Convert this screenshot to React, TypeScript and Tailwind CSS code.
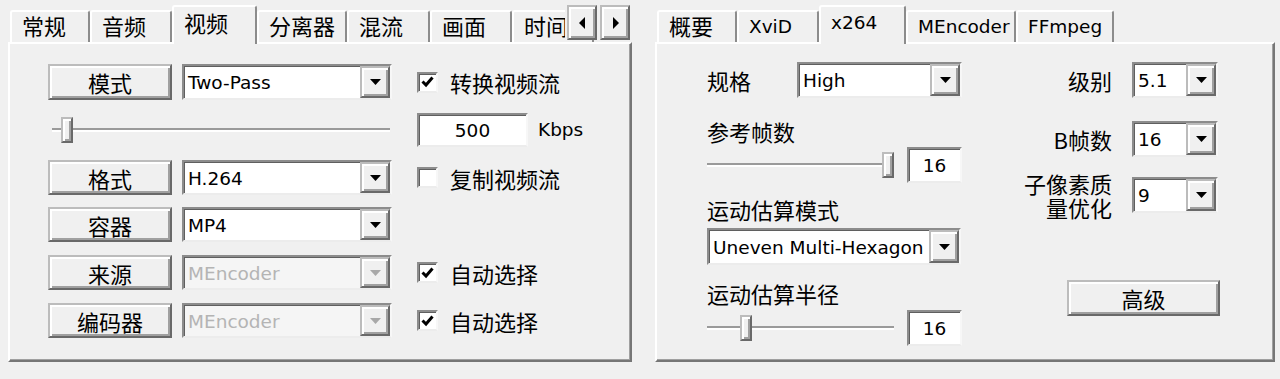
import clsx from "clsx";

const cjk = "font-['Noto_Sans_CJK_SC','DejaVu_Sans',sans-serif] text-[22px]";
const lat = "font-['DejaVu_Sans','Noto_Sans_CJK_SC',sans-serif] text-[18.5px]";

const raised =
  "border-2 border-t-[#bcbcbc] border-l-[#bcbcbc] border-r-[#696969] border-b-[#696969] bg-[#f0f0f0] shadow-[inset_2px_2px_0_#ffffff,inset_-2px_-2px_0_#a0a0a0]";
const sunken =
  "border-2 border-t-[#8c8c8c] border-l-[#8c8c8c] border-r-[#f7f7f7] border-b-[#ececec] shadow-[inset_1px_1px_0_#5f5f5f]";
const panel =
  "h-[320px] border-2 border-t-white border-l-white border-r-[#767676] border-b-[#767676] shadow-[inset_-1px_-1px_0_#a0a0a0]";

type TabItem = { label: string; w: string; latin?: boolean; selected?: boolean };

const leftTabs: TabItem[] = [
  { label: "常规", w: "w-[80px]" },
  { label: "音频", w: "w-[82px]" },
  { label: "视频", w: "w-[85px]", selected: true },
  { label: "分离器", w: "w-[90px]" },
  { label: "混流", w: "w-[83px]" },
  { label: "画面", w: "w-[82px]" },
  { label: "时间", w: "w-[82px]" },
];

const rightTabs: TabItem[] = [
  { label: "概要", w: "w-[80px]" },
  { label: "XviD", w: "w-[82px]", latin: true },
  { label: "x264", w: "w-[87px]", latin: true, selected: true },
  { label: "MEncoder", w: "w-[110px]", latin: true },
  { label: "FFmpeg", w: "w-[98px]", latin: true },
];

function Tab({ label, w, latin, selected }: TabItem) {
  return (
    <div
      className={clsx(
        "flex shrink-0 items-start whitespace-nowrap rounded-t-[3px] border-l-2 border-r-2 border-t-2 border-l-white border-r-[#8c8c8c] border-t-white bg-[#f0f0f0] pl-[10px] leading-[24px]",
        selected ? "relative z-10 -mb-[2px] h-[39px]" : "h-[32px]",
        latin ? (selected ? "pt-[4px]" : "pt-[3px]") : selected ? "pt-[3px]" : "pt-[1px]",
        latin ? lat : cjk,
        w,
      )}
    >
      {label}
    </div>
  );
}

function DownArrow({ disabled = false }: { disabled?: boolean }) {
  return (
    <svg width="11" height="6" viewBox="0 0 11 6" className="block">
      <polygon points="0,0 11,0 5.5,6" fill={disabled ? "#a8a8a8" : "#000"} />
    </svg>
  );
}

function ArrowButton({ dir }: { dir: "left" | "right" }) {
  return (
    <div className={clsx("flex h-[35px] w-[30px] items-center justify-center", raised)}>
      <svg width="7" height="12" viewBox="0 0 7 12" className="block">
        <polygon points={dir === "left" ? "6,0 6,12 0,6" : "1,0 1,12 7,6"} fill="#000" />
      </svg>
    </div>
  );
}

function WinButton({ label, className }: { label: string; className?: string }) {
  return (
    <div className={clsx("flex items-center justify-center leading-none", raised, cjk, className)}>
      {label}
    </div>
  );
}

function Combo({ value, className, disabled = false }: { value: string; className?: string; disabled?: boolean }) {
  return (
    <div className={clsx("flex", sunken, className, disabled ? "bg-[#f5f5f5]" : "bg-white")}>
      <span
        className={clsx(
          "flex-1 self-center overflow-hidden whitespace-nowrap pl-[4px] pt-[2px]",
          lat,
          disabled ? "text-[#b4b4b4]" : "text-black",
        )}
      >
        {value}
      </span>
      <span className={clsx("flex w-[30px] shrink-0 items-center justify-center", raised)}>
        <DownArrow disabled={disabled} />
      </span>
    </div>
  );
}

function TextBox({ value, className }: { value: string; className?: string }) {
  return (
    <div className={clsx("flex items-center justify-center bg-white pt-[2px]", sunken, lat, className)}>
      {value}
    </div>
  );
}

function Check({ checked, label }: { checked: boolean; label: string }) {
  return (
    <div className="flex items-center">
      <span className={clsx("flex h-[21px] w-[21px] shrink-0 items-center justify-center bg-white", sunken)}>
        {checked && (
          <svg width="13" height="12" viewBox="0 0 13 12" className="block">
            <polyline points="1.5,5.5 5,9 11.5,1.5" fill="none" stroke="#000" strokeWidth="3" />
          </svg>
        )}
      </span>
      <span className={clsx("ml-[12px] leading-none", cjk)}>{label}</span>
    </div>
  );
}

function Slider({ className, thumb }: { className?: string; thumb: string }) {
  return (
    <div className={clsx("relative h-[26px] shrink-0", className)}>
      <div className="absolute left-0 right-0 top-[11px] h-[4px] border-b-2 border-t-2 border-b-white border-t-[#9a9a9a]" />
      <div className={clsx("absolute top-0 h-[26px] w-[12px]", raised, thumb)} />
    </div>
  );
}

function FormRow({
  label,
  value,
  disabled,
  check,
}: {
  label: string;
  value: string;
  disabled?: boolean;
  check?: { checked: boolean; label: string };
}) {
  return (
    <div className="flex h-[35px] items-center">
      <WinButton label={label} className="h-[35px] w-[124px]" />
      <Combo value={value} disabled={disabled} className="ml-[10px] h-[35px] w-[210px]" />
      {check && (
        <div className="ml-[25px]">
          <Check checked={check.checked} label={check.label} />
        </div>
      )}
    </div>
  );
}

function VideoPanel() {
  return (
    <div className="ml-[8px] w-[624px] shrink-0">
      <div className="relative flex h-[42px] items-end pl-[2px]">
        {leftTabs.map((t) => (
          <Tab key={t.label} {...t} />
        ))}
        <div className="absolute right-[2px] top-[5px] z-20 flex gap-[3px] bg-[#f0f0f0] pl-[2px]">
          <ArrowButton dir="left" />
          <ArrowButton dir="right" />
        </div>
      </div>
      <div className={clsx(panel, "pl-[38px] pt-[20px]")}>
        <div className="flex h-[36px] items-center">
          <WinButton label="模式" className="h-[36px] w-[124px]" />
          <Combo value="Two-Pass" className="ml-[10px] h-[36px] w-[210px]" />
          <div className="ml-[25px]">
            <Check checked label="转换视频流" />
          </div>
        </div>
        <div className="mt-[13px] flex h-[34px] items-center">
          <Slider className="ml-[4px] w-[338px]" thumb="left-[9px]" />
          <TextBox value="500" className="ml-[27px] h-[34px] w-[111px]" />
          <span className={clsx("ml-[10px]", lat)}>Kbps</span>
        </div>
        <div className="mt-[13px]">
          <FormRow label="格式" value="H.264" check={{ checked: false, label: "复制视频流" }} />
        </div>
        <div className="mt-[12px]">
          <FormRow label="容器" value="MP4" />
        </div>
        <div className="mt-[13px]">
          <FormRow label="来源" value="MEncoder" disabled check={{ checked: true, label: "自动选择" }} />
        </div>
        <div className="mt-[13px]">
          <FormRow label="编码器" value="MEncoder" disabled check={{ checked: true, label: "自动选择" }} />
        </div>
      </div>
    </div>
  );
}

function SideRow({ label, value, className }: { label: string; value: string; className?: string }) {
  return (
    <div className={clsx("flex items-center", className)}>
      <span className={clsx("w-[112px] text-right leading-[24px]", cjk)}>{label}</span>
      <Combo value={value} className="ml-[20px] h-[36px] w-[86px]" />
    </div>
  );
}

function X264Panel() {
  return (
    <div className="ml-[23px] w-[620px] shrink-0">
      <div className="flex h-[42px] items-end pl-[2px]">
        {rightTabs.map((t) => (
          <Tab key={t.label} {...t} />
        ))}
      </div>
      <div className={clsx(panel, "flex pl-[50px] pt-[18px]")}>
        <div className="flex w-[255px] shrink-0 flex-col">
          <div className="flex h-[36px] items-center">
            <span className={clsx("w-[90px] leading-[24px]", cjk)}>规格</span>
            <Combo value="High" className="h-[36px] w-[165px]" />
          </div>
          <span className={clsx("mt-[21px] leading-[24px]", cjk)}>参考帧数</span>
          <div className="mt-[4px] flex h-[36px] items-center">
            <Slider className="w-[187px]" thumb="left-[175px]" />
            <TextBox value="16" className="ml-[13px] h-[36px] w-[55px]" />
          </div>
          <span className={clsx("mt-[14px] leading-[24px]", cjk)}>运动估算模式</span>
          <Combo value="Uneven Multi-Hexagon" className="mt-[7px] h-[37px] w-[254px]" />
          <span className={clsx("mt-[16px] leading-[24px]", cjk)}>运动估算半径</span>
          <div className="mt-[5px] flex h-[36px] items-center">
            <Slider className="w-[187px]" thumb="left-[33px]" />
            <TextBox value="16" className="ml-[13px] h-[36px] w-[55px]" />
          </div>
        </div>
        <div className="ml-[38px] flex flex-col">
          <SideRow label="级别" value="5.1" className="h-[35px]" />
          <SideRow label="B帧数" value="16" className="mt-[24px] h-[36px]" />
          <div className="mt-[14px] flex h-[48px] items-center">
            <div className={clsx("flex w-[112px] flex-col items-end", cjk)}>
              <span className="h-[24px] leading-[24px]">子像素质</span>
              <span className="h-[24px] leading-[24px]">量优化</span>
            </div>
            <Combo value="9" className="ml-[20px] h-[36px] w-[86px]" />
          </div>
          <WinButton label="高级" className="ml-[67px] mt-[61px] h-[36px] w-[153px]" />
        </div>
      </div>
    </div>
  );
}

export default function App() {
  return (
    <div className="flex h-[379px] w-[1280px] overflow-hidden bg-[#f0f0f0] text-black">
      <VideoPanel />
      <X264Panel />
    </div>
  );
}
